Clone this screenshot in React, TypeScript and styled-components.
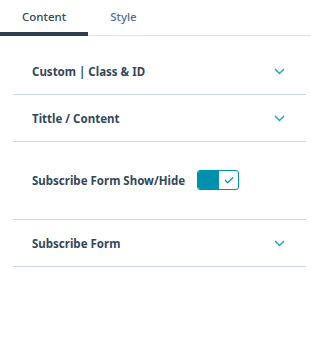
import React, { useState } from 'react';
import styled, { createGlobalStyle } from 'styled-components';

const GlobalStyle = createGlobalStyle`
  body {
    margin: 0;
    background: #ffffff;
    font-family: "Noto Sans", "Liberation Sans", sans-serif;
    color: #33475b;
  }
`;

const Panel = styled.div`
  width: 311px;
`;

const TabBar = styled.div`
  display: flex;
  height: 36px;
  border-bottom: 1px solid #dfe3eb;
  box-sizing: border-box;
`;

const Tab = styled.div<{ $active?: boolean }>`
  display: flex;
  align-items: center;
  justify-content: center;
  padding: 0 22px;
  height: 36px;
  box-sizing: border-box;
  font-size: 11.5px;
  font-weight: 500;
  color: ${(p) => (p.$active ? '#33475b' : '#516f90')};
  border-bottom: 4px solid ${(p) => (p.$active ? '#2d3e50' : 'transparent')};
  margin-bottom: -1px;
`;

const Sections = styled.div`
  margin: 12px 5px 0 13px;
`;

const Row = styled.div<{ $tall?: boolean }>`
  display: flex;
  align-items: center;
  justify-content: ${(p) => (p.$tall ? 'flex-start' : 'space-between')};
  height: ${(p) => (p.$tall ? '77px' : '46px')};
  padding: 0 21px 0 19px;
  border-bottom: 1px solid #cbd6e2;
  gap: 12px;
`;

const Label = styled.span`
  font-size: 11.5px;
  font-weight: 700;
  color: #33475b;
`;

const Toggle = styled.button`
  display: flex;
  width: 42px;
  height: 20px;
  padding: 0;
  border: 1px solid #0091ae;
  border-radius: 3px;
  background: #ffffff;
  overflow: hidden;
  cursor: pointer;
  margin-top: -1px;
`;

const Knob = styled.span`
  width: 21px;
  height: 100%;
  background: #0091ae;
`;

const Mark = styled.span`
  flex: 1;
  display: flex;
  align-items: center;
  justify-content: center;
`;

const Chevron = () => (
  <svg width="11" height="7" viewBox="0 0 11 7" fill="none">
    <path d="M1 1l4.5 4.5L10 1" stroke="#1aa3c3" strokeWidth="1.4" />
  </svg>
);

const Check = () => (
  <svg width="10" height="8" viewBox="0 0 10 8" fill="none">
    <path d="M1 4l2.7 2.7L9 1.5" stroke="#0091ae" strokeWidth="1.2" />
  </svg>
);

export default function App() {
  const [tab, setTab] = useState('content');
  return (
    <>
      <GlobalStyle />
      <Panel>
        <TabBar>
          <Tab $active={tab === 'content'} onClick={() => setTab('content')}>
            Content
          </Tab>
          <Tab $active={tab === 'style'} onClick={() => setTab('style')}>
            Style
          </Tab>
        </TabBar>
        <Sections>
          <Row>
            <Label>Custom | Class &amp; ID</Label>
            <Chevron />
          </Row>
          <Row>
            <Label>Tittle / Content</Label>
            <Chevron />
          </Row>
          <Row $tall>
            <Label>Subscribe Form Show/Hide</Label>
            <Toggle>
              <Knob />
              <Mark>
                <Check />
              </Mark>
            </Toggle>
          </Row>
          <Row>
            <Label>Subscribe Form</Label>
            <Chevron />
          </Row>
        </Sections>
      </Panel>
    </>
  );
}
